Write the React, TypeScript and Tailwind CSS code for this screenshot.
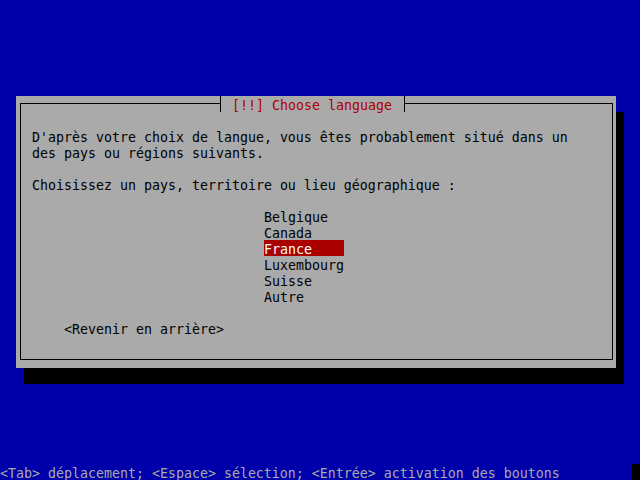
import React from 'react';

const COUNTRIES = ['Belgique', 'Canada', 'France', 'Luxembourg', 'Suisse', 'Autre'];
const SELECTED = 'France';

// one terminal row: 16px tall, text sits a little low like the console font
function Row({ children, className = '' }: { children?: React.ReactNode; className?: string }) {
  return <div className={`h-4 leading-[19px] whitespace-pre ${className}`}>{children}</div>;
}

export default function App() {
  return (
    <div className="w-[640px] h-[480px] bg-[#0000aa] flex flex-col overflow-hidden font-['DejaVu_Sans_Mono','Liberation_Mono',monospace] text-[13.29px] text-black">
      {/* Dialog */}
      <div className="mt-[96px] ml-4 w-[600px] h-[272px] bg-[#aaaaaa] shadow-[8px_16px_0_0_#000] pt-[7px] pl-1">
        <div className="relative w-[593px] h-[257px] border border-black pt-6 pl-[11px]">
          {/* Title over the top border */}
          <div className="absolute left-[199px] -top-[8px] w-[185px] h-4 bg-[#aaaaaa] border-l border-r border-black pl-[11px] leading-[19px] text-[#aa0000] whitespace-pre">
            [!!] Choose language
          </div>

          <Row>D'après votre choix de langue, vous êtes probablement situé dans un</Row>
          <Row>des pays ou régions suivants.</Row>
          <Row />
          <Row>Choisissez un pays, territoire ou lieu géographique :</Row>
          <Row />

          <div className="ml-[232px] w-20">
            {COUNTRIES.map(c => (
              <Row key={c} className={c === SELECTED ? 'bg-[#aa0000] text-white' : ''}>{c}</Row>
            ))}
          </div>

          <Row />
          <Row className="ml-8">&lt;Revenir en arrière&gt;</Row>
        </div>
      </div>

      {/* Status line */}
      <div className="mt-auto h-4 flex text-[#aaaaaa]">
        <Row>&lt;Tab&gt; déplacement; &lt;Espace&gt; sélection; &lt;Entrée&gt; activation des boutons</Row>
        <div className="ml-auto w-2 h-4 bg-black" />
      </div>
    </div>
  );
}
